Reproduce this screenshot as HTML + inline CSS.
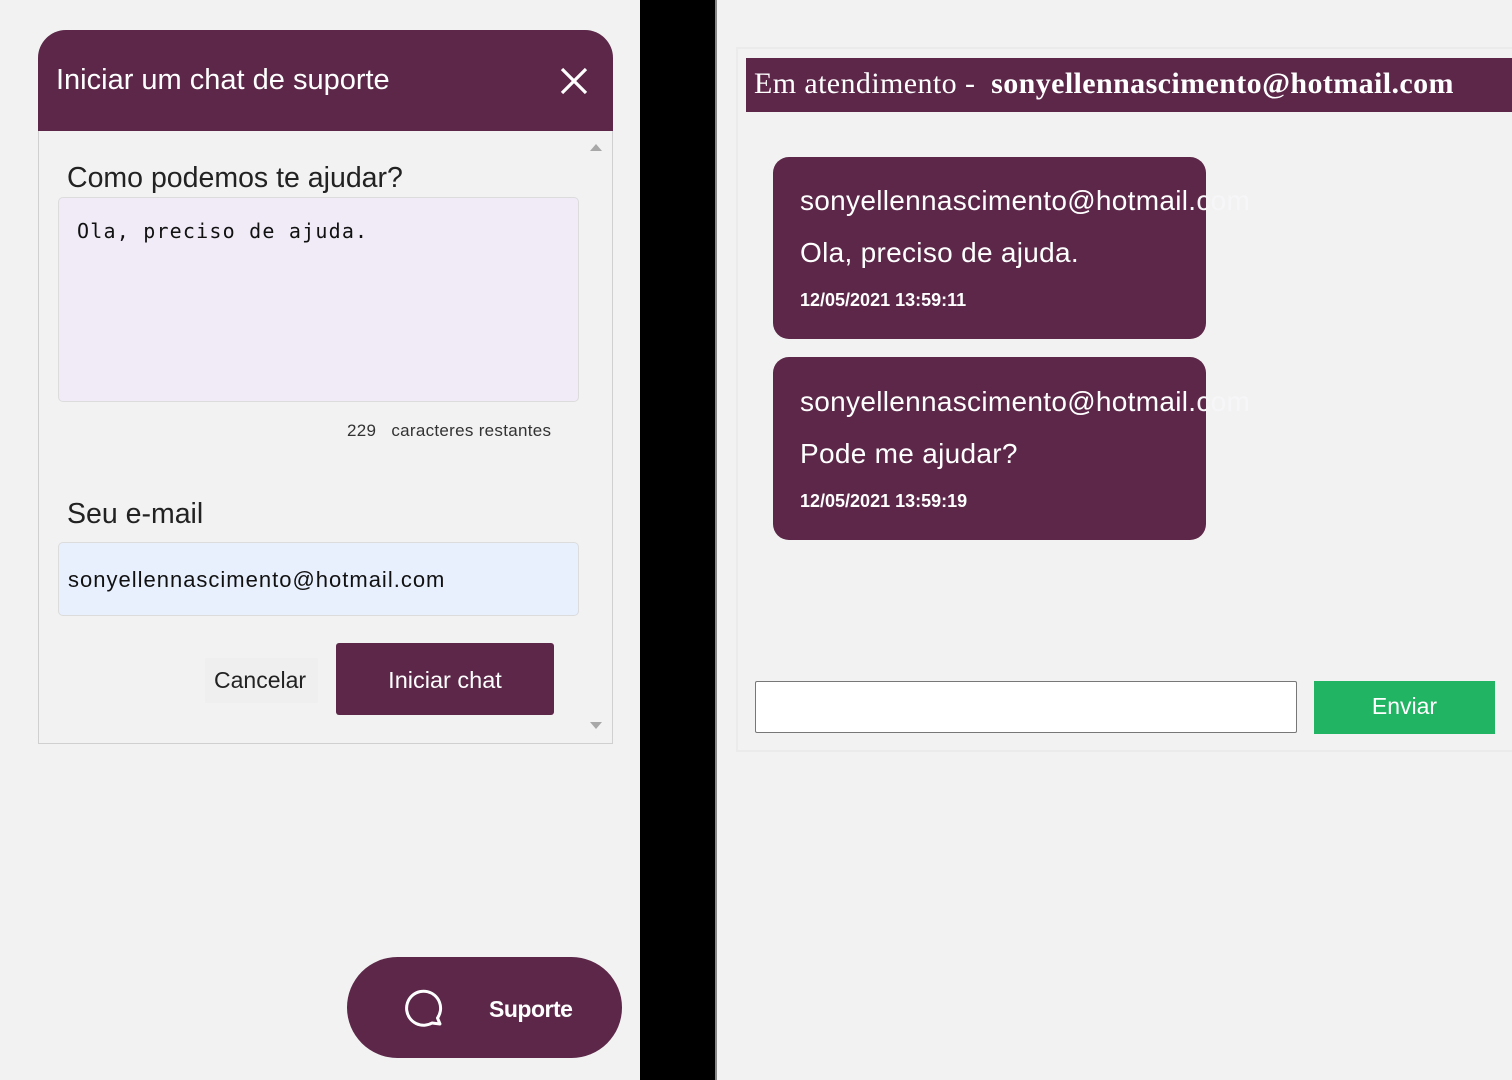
<!DOCTYPE html>
<html><head><meta charset="utf-8"><style>
*{margin:0;padding:0;box-sizing:border-box}
body{width:1512px;height:1080px;background:#f2f2f2;position:relative;overflow:hidden;font-family:"Liberation Sans",Arial,sans-serif}
.a{position:absolute}
.p{background:#5c2748}
</style></head><body>
<div class="a" style="left:640px;top:0;width:75px;height:1080px;background:#000"></div>
<div class="a" style="left:715px;top:0;width:2px;height:1080px;background:#888"></div>

<!-- left dialog -->
<div class="a" style="left:38px;top:30px;width:575px;height:714px;border:1.5px solid #d0d0d0;border-radius:28px 28px 0 0;background:#f2f2f2"></div>
<div class="a p" style="left:38px;top:30px;width:575px;height:101px;border-radius:28px 28px 0 0"></div>
<div class="a" style="left:56px;top:64px;color:#fff;font-size:29px;white-space:nowrap">Iniciar um chat de suporte</div>
<svg class="a" style="left:560px;top:67px" width="28" height="28"><path d="M2 2L26 26M26 2L2 26" stroke="#fff" stroke-width="3.2"/></svg>
<div class="a" style="left:590px;top:144px;width:0;height:0;border-left:6px solid transparent;border-right:6px solid transparent;border-bottom:7px solid #a8a8a8"></div>
<div class="a" style="left:590px;top:722px;width:0;height:0;border-left:6px solid transparent;border-right:6px solid transparent;border-top:7px solid #a8a8a8"></div>
<div class="a" style="left:67px;top:162px;color:#222;font-size:28.5px;white-space:nowrap">Como podemos te ajudar?</div>
<div class="a" style="left:58px;top:197px;width:521px;height:205px;background:#f1ebf8;border:1.5px solid #dcdcdc;border-radius:5px"></div>
<div class="a" style="left:77px;top:219px;font-family:'DejaVu Sans Mono','Liberation Mono',monospace;font-size:20px;letter-spacing:1.2px;color:#111;white-space:nowrap">Ola, preciso de ajuda.</div>
<div class="a" style="left:347px;top:421px;font-size:17px;letter-spacing:0.3px;color:#333;white-space:nowrap">229&nbsp;&nbsp; caracteres restantes</div>
<div class="a" style="left:67px;top:498px;color:#222;font-size:28.5px">Seu e-mail</div>
<div class="a" style="left:58px;top:542px;width:521px;height:74px;background:#e8f0fe;border:1.5px solid #dcdcdc;border-radius:5px"></div>
<div class="a" style="left:68px;top:567px;font-size:22px;letter-spacing:1px;color:#111;white-space:nowrap">sonyellennascimento@hotmail.com</div>
<div class="a" style="left:205px;top:658px;width:113px;height:45px;background:#efefef"></div>
<div class="a" style="left:214px;top:667px;font-size:23px;color:#222">Cancelar</div>
<div class="a p" style="left:336px;top:643px;width:218px;height:72px;border-radius:3px"></div>
<div class="a" style="left:336px;top:667px;width:218px;text-align:center;font-size:23.5px;color:#fff">Iniciar chat</div>

<div class="a p" style="left:347px;top:957px;width:275px;height:101px;border-radius:51px"></div>
<svg class="a" style="left:400px;top:986px" width="48" height="44"><path d="M37.5 32 A17 17 0 1 0 32 37 L40 38 Z" fill="none" stroke="#fff" stroke-width="3" stroke-linejoin="round"/></svg>
<div class="a" style="left:489px;top:996px;font-size:23px;color:#fff;font-weight:bold;letter-spacing:-0.5px">Suporte</div>

<!-- right -->
<div class="a" style="left:736px;top:47px;width:790px;height:705px;border:2px solid #ebebeb"></div>
<div class="a p" style="left:746px;top:58px;width:770px;height:54px"></div>
<div class="a" style="left:754px;top:67px;font-family:'Liberation Serif',serif;font-size:30px;letter-spacing:0.4px;color:#fff;white-space:nowrap">Em atendimento -&nbsp; <b>sonyellennascimento@hotmail.com</b></div>

<div class="a p" style="left:773px;top:157px;width:433px;height:182px;border-radius:16px"></div>
<div class="a" style="left:800px;top:185px;font-size:28px;letter-spacing:0.3px;color:#fff;white-space:nowrap">sonyellennascimento@hotmail.<span style="color:#f6f6f8">com</span></div>
<div class="a" style="left:800px;top:237px;font-size:28px;letter-spacing:0.3px;color:#fff">Ola, preciso de ajuda.</div>
<div class="a" style="left:800px;top:290px;font-size:18px;color:#fff;font-weight:bold">12/05/2021 13:59:11</div>

<div class="a p" style="left:773px;top:357px;width:433px;height:183px;border-radius:16px"></div>
<div class="a" style="left:800px;top:386px;font-size:28px;letter-spacing:0.3px;color:#fff;white-space:nowrap">sonyellennascimento@hotmail.<span style="color:#f6f6f8">com</span></div>
<div class="a" style="left:800px;top:438px;font-size:28px;letter-spacing:0.3px;color:#fff">Pode me ajudar?</div>
<div class="a" style="left:800px;top:491px;font-size:18px;color:#fff;font-weight:bold">12/05/2021 13:59:19</div>

<div class="a" style="left:755px;top:681px;width:542px;height:52px;background:#fff;border:1.5px solid #777;border-radius:2px"></div>
<div class="a" style="left:1314px;top:681px;width:181px;height:53px;background:#21b463"></div>
<div class="a" style="left:1314px;top:693px;width:181px;text-align:center;font-size:23px;color:#fff">Enviar</div>
</body></html>
